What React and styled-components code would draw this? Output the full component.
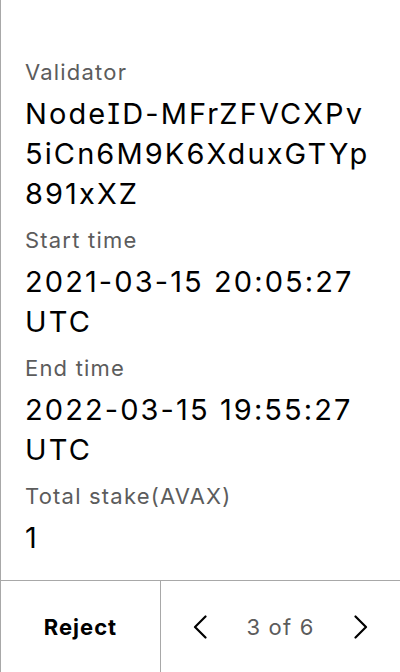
import React from "react";
import styled, { createGlobalStyle } from "styled-components";

const GlobalStyle = createGlobalStyle`
  html, body {
    margin: 0;
    padding: 0;
    background: #ffffff;
  }
  body {
    font-family: "Inter", "Noto Sans", sans-serif;
    font-feature-settings: "cv08";
  }
`;

const Screen = styled.div`
  width: 400px;
  height: 672px;
  box-sizing: border-box;
  border-left: 1px solid #a8a8a8;
  display: flex;
  flex-direction: column;
  background: #ffffff;
`;

const Details = styled.div`
  flex: 1;
  padding: 58px 20px 0 24px;
  display: flex;
  flex-direction: column;
  gap: 12px;
`;

const Field = styled.div`
  display: flex;
  flex-direction: column;
  gap: 8px;
`;

const Label = styled.div`
  font-size: 22px;
  line-height: 28px;
  letter-spacing: 1.2px;
  color: #5c5c5c;
`;

const Value = styled.div`
  font-size: 29px;
  line-height: 40px;
  letter-spacing: 2.1px;
  color: #000000;
  word-break: break-all;
`;

const Footer = styled.div`
  height: 92px;
  box-sizing: border-box;
  border-top: 1px solid #a8a8a8;
  display: flex;
`;

const RejectButton = styled.button`
  width: 160px;
  box-sizing: border-box;
  border: none;
  border-right: 1px solid #a8a8a8;
  background: transparent;
  font-family: "Inter", sans-serif;
  font-weight: 700;
  font-size: 22px;
  letter-spacing: 1px;
  color: #000000;
  padding: 0;
`;

const Pager = styled.div`
  flex: 1;
  display: flex;
  align-items: center;
  justify-content: space-between;
  padding: 0 31px 0 31px;
`;

const PageText = styled.span`
  font-size: 22px;
  letter-spacing: 1.2px;
  color: #5c5c5c;
`;

const NavButton = styled.button`
  border: none;
  background: transparent;
  padding: 0;
  width: 16px;
  height: 24px;
  display: flex;
  align-items: center;
  justify-content: center;
`;

const Chevron = ({ dir }) => (
  <svg width="16" height="24" viewBox="0 0 16 24" fill="none">
    <path
      d={dir === "left" ? "M13.5 1.5 L3 12 L13.5 22.5" : "M2.5 1.5 L13 12 L2.5 22.5"}
      stroke="#000"
      strokeWidth="2.2"
      strokeLinecap="round"
      strokeLinejoin="round"
    />
  </svg>
);

const fields = [
  { label: "Validator", value: "NodeID-MFrZFVCXPv5iCn6M9K6XduxGTYp891xXZ" },
  { label: "Start time", value: "2021-03-15 20:05:27 UTC" },
  { label: "End time", value: "2022-03-15 19:55:27 UTC" },
  { label: "Total stake(AVAX)", value: "1" },
];

export default function App() {
  return (
    <>
      <GlobalStyle />
      <Screen>
        <Details>
          {fields.map((f) => (
            <Field key={f.label}>
              <Label>{f.label}</Label>
              <Value>{f.value}</Value>
            </Field>
          ))}
        </Details>
        <Footer>
          <RejectButton>Reject</RejectButton>
          <Pager>
            <NavButton>
              <Chevron dir="left" />
            </NavButton>
            <PageText>3 of 6</PageText>
            <NavButton>
              <Chevron dir="right" />
            </NavButton>
          </Pager>
        </Footer>
      </Screen>
    </>
  );
}
